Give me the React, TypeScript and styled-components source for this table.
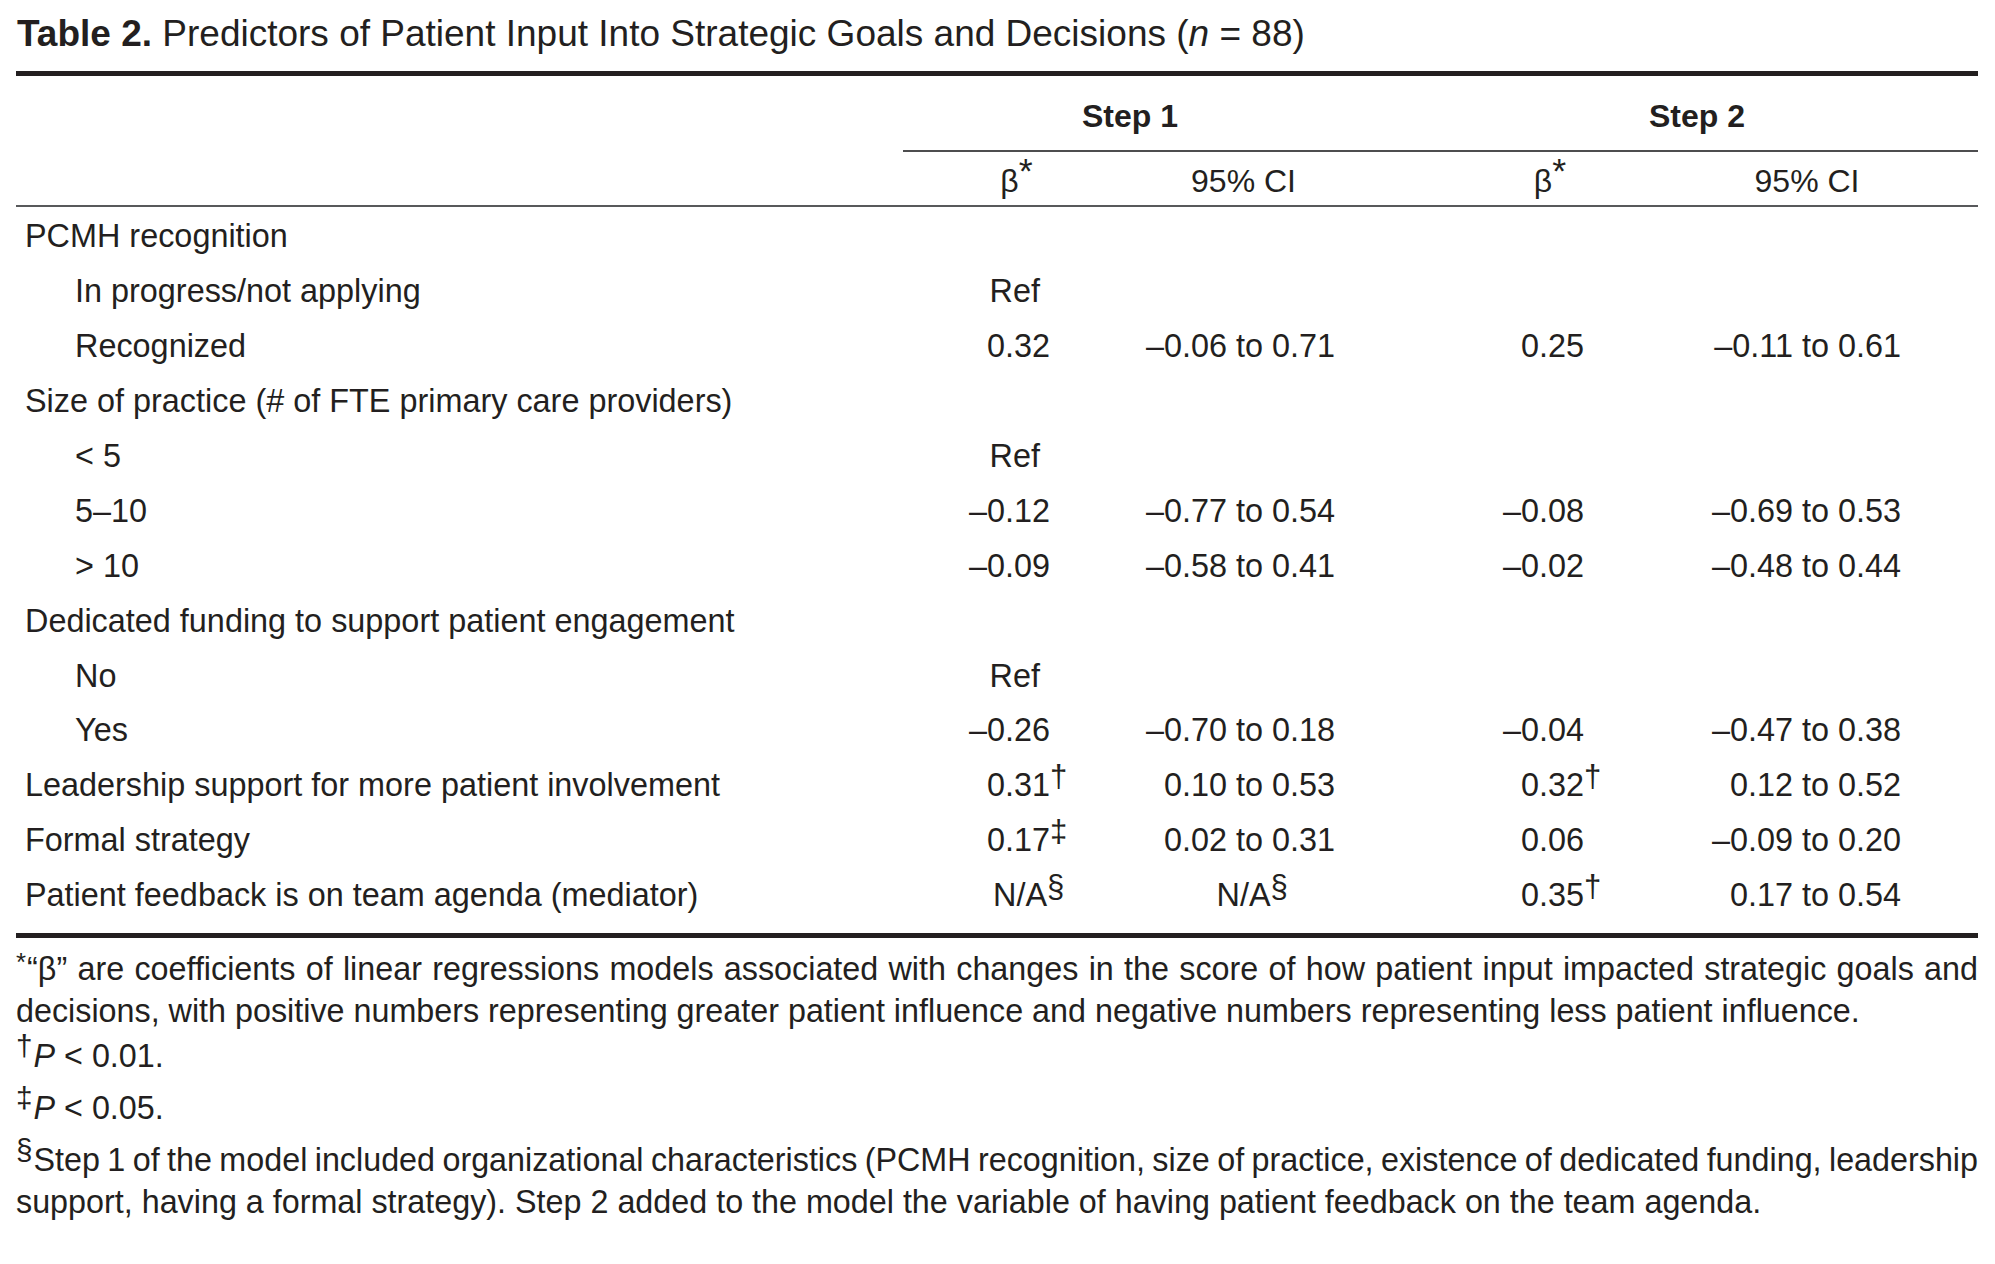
import React from 'react';
import styled, { createGlobalStyle } from 'styled-components';

const GlobalStyle = createGlobalStyle`
  html, body {
    margin: 0;
    padding: 0;
    background: #ffffff;
  }

  body {
    font-family: 'Liberation Sans', Arial, Helvetica, sans-serif;
    color: #231f20;
  }
`;

const COLS = '887px 227px 227px 340px 281px';

const Page = styled.div`
  width: 1962px;
  padding: 12px 17px 0 16px;
`;

const Title = styled.h1`
  margin: 0 0 15px 1px;
  font-size: 37px;
  line-height: 44px;
  font-weight: 400;
  white-space: nowrap;

  b {
    font-weight: 700;
  }
`;

const Rule = styled.div`
  height: 5px;
  background: #231f20;
`;

const HeadRow = styled.div`
  display: grid;
  grid-template-columns: ${COLS};
`;

const StepCell = styled.div<{ $pl?: number }>`
  grid-column: span 2;
  padding: 20px 0 14px ${(p) => p.$pl || 0}px;
  border-bottom: 2px solid #4d4d4f;
  font-size: 32px;
  line-height: 40px;
  font-weight: 700;
  text-align: center;
`;

const HeadCell = styled.div<{ $pl?: number; $pr?: number }>`
  padding: 9px ${(p) => p.$pr || 0}px 4px ${(p) => p.$pl || 0}px;
  border-bottom: 2px solid #58595b;
  font-size: 32px;
  line-height: 40px;
  text-align: center;
`;

const Star = styled.span`
  display: inline-block;
  font-size: 1.12em;
  line-height: 0;
  position: relative;
  top: -0.26em;
`;

const Body = styled.div`
  padding: 2px 0 10px;
`;

const Row = styled.div`
  display: grid;
  grid-template-columns: ${COLS};
  height: 54.9px;
  align-items: center;
  font-size: 32.4px;
  line-height: 40px;
  white-space: nowrap;
`;

const Label = styled.div<{ $sub?: boolean }>`
  padding-left: ${(p) => (p.$sub ? 59 : 9)}px;
`;

const Value = styled.div<{ $pr: number; $center?: boolean }>`
  display: flex;
  justify-content: ${(p) => (p.$center ? 'center' : 'flex-end')};
  padding-right: ${(p) => (p.$center ? 0 : p.$pr)}px;
`;

const Mark = styled.span`
  display: inline-block;
  width: 0;
  white-space: nowrap;
  font-size: 0.96em;
  line-height: 0;
  position: relative;
  top: -0.3em;
`;

const Notes = styled.div`
  padding-top: 10px;
`;

const Note = styled.p<{ $mt?: number }>`
  margin: ${(p) => p.$mt || 0}px 0 0;
  font-size: 32.3px;
  line-height: 42px;
  text-align: justify;

  i {
    font-style: italic;
  }
`;

const TightLine = styled.span`
  display: block;
  white-space: nowrap;
  word-spacing: -3px;
  text-align-last: justify;
`;

const NoteMark = styled.span<{ $small?: boolean }>`
  display: inline-block;
  font-size: ${(p) => (p.$small ? 0.8 : 0.92)}em;
  line-height: 0;
  position: relative;
  top: -0.34em;
  margin-right: 1px;
`;

type Cell = { v: string; m?: string; center?: boolean; pr?: number };

type Line = {
  label: string;
  sub?: boolean;
  cells?: (Cell | null)[];
};

// padding-right of the value in each numeric column
const PR = [80, 22, 113, 77];

const REF: Cell = { v: 'Ref', pr: 90 };

const rows: Line[] = [
  { label: 'PCMH recognition' },
  { label: 'In progress/not applying', sub: true, cells: [REF] },
  {
    label: 'Recognized',
    sub: true,
    cells: [{ v: '0.32' }, { v: '–0.06 to 0.71' }, { v: '0.25' }, { v: '–0.11 to 0.61' }],
  },
  { label: 'Size of practice (# of FTE primary care providers)' },
  { label: '< 5', sub: true, cells: [REF] },
  {
    label: '5–10',
    sub: true,
    cells: [{ v: '–0.12' }, { v: '–0.77 to 0.54' }, { v: '–0.08' }, { v: '–0.69 to 0.53' }],
  },
  {
    label: '> 10',
    sub: true,
    cells: [{ v: '–0.09' }, { v: '–0.58 to 0.41' }, { v: '–0.02' }, { v: '–0.48 to 0.44' }],
  },
  { label: 'Dedicated funding to support patient engagement' },
  { label: 'No', sub: true, cells: [REF] },
  {
    label: 'Yes',
    sub: true,
    cells: [{ v: '–0.26' }, { v: '–0.70 to 0.18' }, { v: '–0.04' }, { v: '–0.47 to 0.38' }],
  },
  {
    label: 'Leadership support for more patient involvement',
    cells: [{ v: '0.31', m: '†' }, { v: '0.10 to 0.53' }, { v: '0.32', m: '†' }, { v: '0.12 to 0.52' }],
  },
  {
    label: 'Formal strategy',
    cells: [{ v: '0.17', m: '‡' }, { v: '0.02 to 0.31' }, { v: '0.06' }, { v: '–0.09 to 0.20' }],
  },
  {
    label: 'Patient feedback is on team agenda (mediator)',
    cells: [
      { v: 'N/A', m: '§', pr: 83 },
      { v: 'N/A', m: '§', center: true },
      { v: '0.35', m: '†' },
      { v: '0.17 to 0.54' },
    ],
  },
];

const App: React.FC = () => {
  return (
    <>
      <GlobalStyle />
      <Page>
        <Title>
          <b>Table 2.</b> Predictors of Patient Input Into Strategic Goals and Decisions (<i>n</i> = 88)
        </Title>
        <Rule />

        <HeadRow>
          <div />
          <StepCell>Step 1</StepCell>
          <StepCell $pl={59}>Step 2</StepCell>
        </HeadRow>
        <HeadRow>
          <HeadCell />
          <HeadCell>
            β<Star>*</Star>
          </HeadCell>
          <HeadCell>95% CI</HeadCell>
          <HeadCell $pl={46}>
            β<Star>*</Star>
          </HeadCell>
          <HeadCell $pr={61}>95% CI</HeadCell>
        </HeadRow>

        <Body>
          {rows.map((r) => (
            <Row key={r.label}>
              <Label $sub={r.sub}>{r.label}</Label>
              {[0, 1, 2, 3].map((i) => {
                const c = r.cells ? r.cells[i] : null;
                return (
                  <Value key={i} $pr={c?.pr ?? PR[i]} $center={c?.center}>
                    {c && (
                      <span>
                        {c.v}
                        {c.m && <Mark>{c.m}</Mark>}
                      </span>
                    )}
                  </Value>
                );
              })}
            </Row>
          ))}
        </Body>
        <Rule />

        <Notes>
          <Note>
            <NoteMark $small>*</NoteMark>“β” are coefficients of linear regressions models associated with changes in
            the score of how patient input impacted strategic goals and decisions, with positive numbers representing
            greater patient influence and negative numbers representing less patient influence.
          </Note>
          <Note $mt={3}>
            <NoteMark>†</NoteMark>
            <i>P</i> &lt; 0.01.
          </Note>
          <Note $mt={10}>
            <NoteMark>‡</NoteMark>
            <i>P</i> &lt; 0.05.
          </Note>
          <Note $mt={10}>
            <TightLine>
              <NoteMark>§</NoteMark>Step 1 of the model included organizational characteristics (PCMH recognition, size
              of practice, existence of dedicated funding, leadership
            </TightLine>
            support, having a formal strategy). Step 2 added to the model the variable of having patient feedback on
            the team agenda.
          </Note>
        </Notes>
      </Page>
    </>
  );
};

export default App;
